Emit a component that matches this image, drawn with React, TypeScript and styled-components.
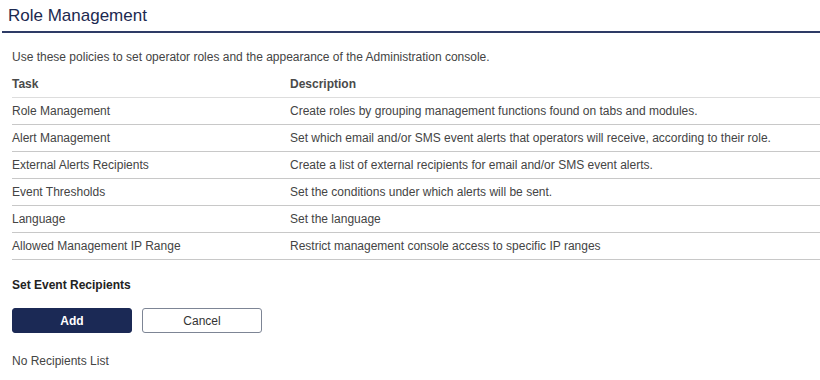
import React from "react";
import styled, { createGlobalStyle } from "styled-components";

const GlobalStyle = createGlobalStyle`
  body {
    margin: 0;
    background: #ffffff;
    font-family: "Liberation Sans", Arial, sans-serif;
    color: #333333;
  }
`;

type Policy = {
  task: string;
  description: string;
};

const policies: Policy[] = [
  {
    task: "Role Management",
    description:
      "Create roles by grouping management functions found on tabs and modules.",
  },
  {
    task: "Alert Management",
    description:
      "Set which email and/or SMS event alerts that operators will receive, according to their role.",
  },
  {
    task: "External Alerts Recipients",
    description:
      "Create a list of external recipients for email and/or SMS event alerts.",
  },
  {
    task: "Event Thresholds",
    description: "Set the conditions under which alerts will be sent.",
  },
  { task: "Language", description: "Set the language" },
  {
    task: "Allowed Management IP Range",
    description: "Restrict management console access to specific IP ranges",
  },
];

const Page = styled.div`
  width: 820px;
  height: 380px;
  overflow: hidden;
`;

const TitleBar = styled.div`
  margin-left: 2px;
  padding: 6px 0 5px 6px;
  border-bottom: 2px solid #2e3b66;
`;

const Title = styled.h1`
  margin: 0;
  font-size: 17px;
  font-weight: normal;
  line-height: 20px;
  color: #1c2950;
`;

const Content = styled.div`
  padding: 17px 0 0 12px;
  font-size: 12px;
  line-height: 14px;
`;

const Intro = styled.p`
  margin: 0;
  color: #444444;
`;

const Table = styled.div`
  margin-top: 6px;
  display: flex;
  flex-direction: column;
`;

const Row = styled.div<{ $head?: boolean }>`
  display: grid;
  grid-template-columns: 278px 1fr;
  align-items: center;
  height: ${(p) => (p.$head ? "27px" : "26px")};
  border-bottom: 1px solid ${(p) => (p.$head ? "#dddddd" : "#c8c8c8")};
  font-weight: ${(p) => (p.$head ? "bold" : "normal")};
  color: ${(p) => (p.$head ? "#4a4a4a" : "#444444")};
`;

const Cell = styled.div`
  white-space: nowrap;
`;

const SectionLabel = styled.div`
  margin-top: 18px;
  font-weight: bold;
  color: #222222;
`;

const Actions = styled.div`
  margin-top: 16px;
  display: flex;
  gap: 10px;
`;

const Button = styled.button<{ $primary?: boolean }>`
  width: 120px;
  height: 25px;
  border-radius: 3px;
  font-family: "Liberation Sans", Arial, sans-serif;
  font-size: 12px;
  cursor: pointer;
  border: 1px solid ${(p) => (p.$primary ? "#1b2955" : "#7d8595")};
  background: ${(p) => (p.$primary ? "#1b2955" : "#ffffff")};
  color: ${(p) => (p.$primary ? "#ffffff" : "#333333")};
  font-weight: ${(p) => (p.$primary ? "bold" : "normal")};
`;

const Empty = styled.p`
  margin: 21px 0 0;
  color: #444444;
`;

export default function App() {
  return (
    <Page>
      <GlobalStyle />
      <TitleBar>
        <Title>Role Management</Title>
      </TitleBar>
      <Content>
        <Intro>
          Use these policies to set operator roles and the appearance of the
          Administration console.
        </Intro>
        <Table>
          <Row $head>
            <Cell>Task</Cell>
            <Cell>Description</Cell>
          </Row>
          {policies.map((p) => (
            <Row key={p.task}>
              <Cell>{p.task}</Cell>
              <Cell>{p.description}</Cell>
            </Row>
          ))}
        </Table>
        <SectionLabel>Set Event Recipients</SectionLabel>
        <Actions>
          <Button $primary>Add</Button>
          <Button>Cancel</Button>
        </Actions>
        <Empty>No Recipients List</Empty>
      </Content>
    </Page>
  );
}
